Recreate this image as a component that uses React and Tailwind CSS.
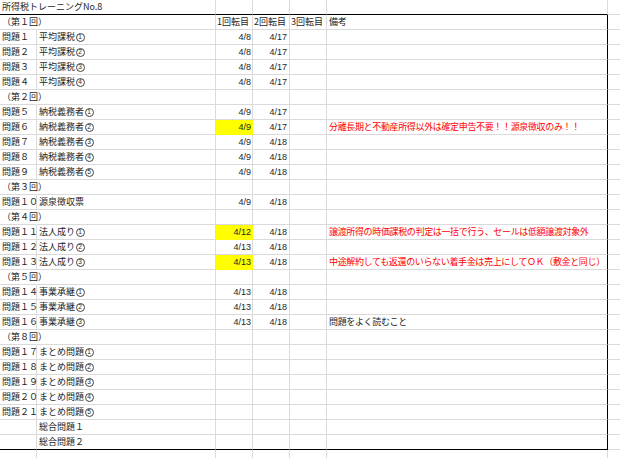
import React from "react";

const rows = [
  { sec: "（第１回）", header: true },
  { a: "問題１", b: "平均課税", n: 1, c: "4/8", d: "4/17" },
  { a: "問題２", b: "平均課税", n: 2, c: "4/8", d: "4/17" },
  { a: "問題３", b: "平均課税", n: 3, c: "4/8", d: "4/17" },
  { a: "問題４", b: "平均課税", n: 4, c: "4/8", d: "4/17" },
  { sec: "（第２回）" },
  { a: "問題５", b: "納税義務者", n: 1, c: "4/9", d: "4/17" },
  { a: "問題６", b: "納税義務者", n: 2, c: "4/9", d: "4/17", y: true, f: "分離長期と不動産所得以外は確定申告不要！！源泉徴収のみ！！", red: true },
  { a: "問題７", b: "納税義務者", n: 3, c: "4/9", d: "4/18" },
  { a: "問題８", b: "納税義務者", n: 4, c: "4/9", d: "4/18" },
  { a: "問題９", b: "納税義務者", n: 5, c: "4/9", d: "4/18" },
  { sec: "（第３回）" },
  { a: "問題１０", b: "源泉徴収票", c: "4/9", d: "4/18" },
  { sec: "（第４回）" },
  { a: "問題１１", b: "法人成り", n: 1, c: "4/12", d: "4/18", y: true, f: "譲渡所得の時価課税の判定は一括で行う、セールは低額譲渡対象外", red: true },
  { a: "問題１２", b: "法人成り", n: 2, c: "4/13", d: "4/18" },
  { a: "問題１３", b: "法人成り", n: 3, c: "4/13", d: "4/18", y: true, f: "中途解約しても返還のいらない着手金は売上にしてＯＫ（敷金と同じ）", red: true },
  { sec: "（第５回）" },
  { a: "問題１４", b: "事業承継", n: 1, c: "4/13", d: "4/18" },
  { a: "問題１５", b: "事業承継", n: 2, c: "4/13", d: "4/18" },
  { a: "問題１６", b: "事業承継", n: 3, c: "4/13", d: "4/18", f: "問題をよく読むこと" },
  { sec: "（第８回）" },
  { a: "問題１７", b: "まとめ問題", n: 1 },
  { a: "問題１８", b: "まとめ問題", n: 2 },
  { a: "問題１９", b: "まとめ問題", n: 3 },
  { a: "問題２０", b: "まとめ問題", n: 4 },
  { a: "問題２１", b: "まとめ問題", n: 5 },
  { a: "", b: "総合問題１" },
  { a: "", b: "総合問題２" },
];

const G = "border-[#dadada]";
const num = { fontFamily: "'Liberation Sans', 'Noto Sans CJK JP', sans-serif" };

function Circled({ n }) {
  return (
    <span
      className="flex h-[9px] w-[9px] shrink-0 items-center justify-center rounded-full border border-[#444] text-[6.5px] leading-none ml-[0.5px] mt-[1px]"
      style={num}
    >
      {n}
    </span>
  );
}

function Row({ r, last }) {
  const bottom = last ? "border-b-black" : "border-b-[#dadada]";
  const base = `h-[15px] shrink-0 border-r border-b leading-[14px] whitespace-nowrap ${G} ${bottom}`;
  return (
    <div className="flex h-[15px]">
      <div className={`${base} w-[37px] relative ${r.sec ? "border-r-white" : ""}`}>
        <span className="absolute left-[2px] top-0">{r.sec || r.a}</span>
      </div>
      <div className={`${base} w-[179px] pl-[2px] flex items-center`}>
        <span>{r.b}</span>
        {r.n ? <Circled n={r.n} /> : null}
      </div>
      <div
        className={`${base} w-[37px] ${r.y ? "bg-[#ffff00] border-r-[#ffff00] border-b-[#ffff00]" : ""} ${r.header ? "text-left pl-[1px]" : "text-right pr-[1px]"}`}
        style={r.header ? undefined : num}
      >
        {r.header ? "1回転目" : r.c}
      </div>
      <div
        className={`${base} w-[37px] ${r.header ? "text-left pl-[1px]" : "text-right pr-[2px]"}`}
        style={r.header ? undefined : num}
      >
        {r.header ? "2回転目" : r.d}
      </div>
      <div className={`${base} w-[37px] pl-[1px]`}>{r.header ? "3回転目" : ""}</div>
      <div className={`${base} w-[281px] pl-[2px] border-r-black tracking-[-0.35px] ${r.red ? "text-[#ff0000]" : ""}`}>
        {r.header ? "備考" : r.f}
      </div>
      <div className={`h-[15px] grow border-b ${G}`}></div>
    </div>
  );
}

export default function App() {
  return (
    <div
      className="w-[620px] h-[458px] overflow-hidden bg-white text-[9px] text-[#1e1e1e]"
      style={{ fontFamily: "'Noto Sans CJK JP', 'Liberation Sans', sans-serif" }}
    >
      <div className="flex h-[15px]">
        <div className="h-[15px] w-[216px] shrink-0 border-b border-r border-b-black border-r-[#dadada] pl-[2px] leading-[14px] whitespace-nowrap">
          所得税トレーニングNo.8
        </div>
        <div className="h-[15px] w-[37px] shrink-0 border-b border-r border-b-black border-r-[#dadada]"></div>
        <div className="h-[15px] w-[37px] shrink-0 border-b border-r border-b-black border-r-[#dadada]"></div>
        <div className="h-[15px] w-[37px] shrink-0 border-b border-r border-b-black border-r-[#dadada]"></div>
        <div className="h-[15px] w-[281px] shrink-0 border-b border-r border-b-black border-r-[#dadada]"></div>
        <div className={`h-[15px] grow border-b ${G}`}></div>
      </div>
      {rows.map((r, i) => (
        <Row key={i} r={r} last={i === rows.length - 1} />
      ))}
      <div className="flex h-[9px]">
        <div className={`h-[9px] w-[37px] shrink-0 border-r ${G}`}></div>
        <div className={`h-[9px] w-[179px] shrink-0 border-r ${G}`}></div>
        <div className={`h-[9px] w-[37px] shrink-0 border-r ${G}`}></div>
        <div className={`h-[9px] w-[37px] shrink-0 border-r ${G}`}></div>
        <div className={`h-[9px] w-[37px] shrink-0 border-r ${G}`}></div>
        <div className={`h-[9px] w-[281px] shrink-0 border-r ${G}`}></div>
      </div>
    </div>
  );
}
